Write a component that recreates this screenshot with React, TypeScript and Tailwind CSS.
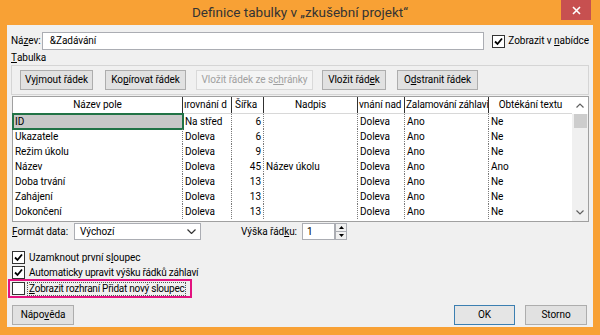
import React from "react";

const cols = [170, 49, 32, 94, 47, 84, 83];

const rows: string[][] = [
  ["ID", "Na střed", "6", "", "Doleva", "Ano", "Ne"],
  ["Ukazatele", "Doleva", "6", "", "Doleva", "Ano", "Ne"],
  ["Režim úkolu", "Doleva", "9", "", "Doleva", "Ano", "Ne"],
  ["Název", "Doleva", "45", "Název úkolu", "Doleva", "Ano", "Ano"],
  ["Doba trvání", "Doleva", "13", "", "Doleva", "Ano", "Ne"],
  ["Zahájení", "Doleva", "13", "", "Doleva", "Ano", "Ne"],
  ["Dokončení", "Doleva", "13", "", "Doleva", "Ano", "Ne"],
];

function Check({ checked }: { checked?: boolean }) {
  return (
    <div className="w-[13px] h-[13px] border border-[#333] bg-white flex items-center justify-center shrink-0">
      {checked && (
        <svg width="9" height="9" viewBox="0 0 9 9">
          <path d="M1 4.5 L3.5 7 L8 1.5" stroke="#000" strokeWidth="1.8" fill="none" />
        </svg>
      )}
    </div>
  );
}

function Btn({ children, w, disabled, focus }: { children: React.ReactNode; w: number; disabled?: boolean; focus?: boolean }) {
  return (
    <div
      style={{ width: w }}
      className={
        "h-[20px] flex items-center justify-center border shrink-0 whitespace-nowrap " +
        (disabled
          ? "border-[#d9d9d9] bg-[#f4f4f4] text-[#a0a0a0]"
          : focus
          ? "border-[#3c7fb1] bg-[#e5e5e5] text-black"
          : "border-[#adadad] bg-[#e1e1e1] text-black")
      }
    >
      {children}
    </div>
  );
}

const headers: React.ReactNode[] = [
  <span className="w-full text-center">Název pole</span>,
  <span className="w-full whitespace-nowrap overflow-hidden pl-[1px]">ırovnání d</span>,
  <span className="w-full pl-[3px]">Šířka</span>,
  <span className="w-full text-center">Nadpis</span>,
  <span className="w-full whitespace-nowrap overflow-hidden pl-[1px]">vnání nad</span>,
  <span className="w-full whitespace-nowrap overflow-hidden pl-[1px] tracking-[-0.15px]">Zalamování záhlavi</span>,
  <span className="w-full text-center">Obtékání textu</span>,
];

export default function App() {
  return (
    <div className="w-[600px] h-[335px] bg-[#f8a135] flex flex-col font-['Roboto',sans-serif] text-[10px] tracking-[-0.05px] text-black leading-none overflow-hidden whitespace-nowrap">
      <div className="h-[25px] relative flex items-center justify-center text-[13.5px] tracking-normal text-[#333] shrink-0">
        Definice tabulky v „zkušební projekt“
        <div className="absolute right-[9px] top-0 w-[30px] h-[20px] bg-[#c75050] flex items-center justify-center">
          <svg width="9" height="9" viewBox="0 0 9 9">
            <path d="M1 1 L8 8 M8 1 L1 8" stroke="#fff" strokeWidth="1.6" />
          </svg>
        </div>
      </div>
      <div className="mx-[7px] h-[302px] bg-[#f0f0f0] flex flex-col px-[4px] shrink-0">
        {/* Name row */}
        <div className="mt-[7px] h-[18px] flex items-center">
          <div className="w-[31px]">
            Ná<u>z</u>ev:
          </div>
          <div className="w-[445px] h-[18px] bg-white border border-[#abadb3] flex items-center pl-[7px]">&amp;Zadávání</div>
          <div className="ml-[8px] flex items-center gap-[3px]">
            <Check checked />
            <span>
              Zobrazit v <u>n</u>abídce
            </span>
          </div>
        </div>
        {/* Tabulka */}
        <div className="mt-[2px] h-[12px] flex items-center">
          <u>T</u>abulka
        </div>
        <div className="mt-[1px] h-[30px] border border-[#d5d5d5] flex items-center pl-[8px]">
          <Btn w={73}>
            Vy<u>j</u>mout řádek
          </Btn>
          <div className="w-[12px]" />
          <Btn w={81}>
            Ko<u>p</u>írovat řádek
          </Btn>
          <div className="w-[10px]" />
          <Btn w={117} disabled>
            Vložit řádek ze s<u>ch</u>ránky
          </Btn>
          <div className="w-[9px]" />
          <Btn w={64}>
            Vložit řád<u>e</u>k
          </Btn>
          <div className="w-[11px]" />
          <Btn w={81}>
            O<u>d</u>stranit řádek
          </Btn>
        </div>
        {/* Table */}
        <div className="mt-[1px] ml-[1px] w-[577px] h-[126px] border border-[#a0a0a0] flex bg-white">
          <div className="flex flex-col">
            <div className="h-[17px] flex border-b border-[#d8d8d8]">
              {headers.map((h, i) => (
                <div
                  key={i}
                  style={{ width: cols[i] }}
                  className={"h-full flex items-center overflow-hidden " + (i < 6 ? "border-r border-[#303030]" : "")}
                >
                  {h}
                </div>
              ))}
            </div>
            {rows.map((r, ri) => (
              <div key={ri} className="h-[15px] flex">
                {r.map((c, ci) => (
                  <div
                    key={ci}
                    style={{ width: cols[ci] }}
                    className={
                      "h-full flex items-center overflow-hidden whitespace-nowrap " +
                      (ci < 6 ? "border-r border-dotted border-[#7a7a7a] " : "") +
                      (ci === 2 ? "justify-end pr-[2px] " : "pl-[2px] ") +
                      (ri === 0 && ci === 0 ? "bg-[#c8c8c8] outline outline-2 outline-[#217346] -outline-offset-1 " : "")
                    }
                  >
                    {c}
                  </div>
                ))}
              </div>
            ))}
          </div>
          <div className="w-[17px] bg-[#f0f0f0] flex flex-col items-center">
            <div className="h-[17px] w-full flex items-center justify-center bg-white">
              <svg width="8" height="5" viewBox="0 0 8 5">
                <path d="M0.5 4.5 L4 1 L7.5 4.5" stroke="#606060" strokeWidth="1.2" fill="none" />
              </svg>
            </div>
            <div className="w-[13px] h-[14px] bg-[#cdcdcd]" />
            <div className="flex-1" />
            <div className="h-[17px] w-full flex items-center justify-center">
              <svg width="8" height="5" viewBox="0 0 8 5">
                <path d="M0.5 0.5 L4 4 L7.5 0.5" stroke="#606060" strokeWidth="1.2" fill="none" />
              </svg>
            </div>
          </div>
        </div>
        {/* Format row */}
        <div className="mt-[1px] h-[17px] flex items-center">
          <div className="w-[63px] pl-[1px]">
            <u>F</u>ormát data:
          </div>
          <div className="w-[127px] h-[17px] bg-white border border-[#abadb3] flex items-center pl-[5px] justify-between pr-[4px]">
            <span>Výchozí</span>
            <svg width="9" height="5" viewBox="0 0 9 5">
              <path d="M0.5 0.5 L4.5 4.5 L8.5 0.5" stroke="#333" strokeWidth="1.2" fill="none" />
            </svg>
          </div>
          <div className="w-[101px] text-right pr-[5px]">
            Výška řád<u>k</u>u:
          </div>
          <div className="w-[33px] h-[17px] bg-white border border-[#abadb3] flex items-center pl-[4px]">1</div>
          <div className="w-[12px] h-[17px] flex flex-col border border-[#abadb3] bg-[#f0f0f0]">
            <div className="flex-1 flex items-center justify-center border-b border-[#abadb3]">
              <svg width="5" height="3" viewBox="0 0 5 3">
                <path d="M0 3 L2.5 0 L5 3 Z" fill="#000" />
              </svg>
            </div>
            <div className="flex-1 flex items-center justify-center">
              <svg width="5" height="3" viewBox="0 0 5 3">
                <path d="M0 0 L2.5 3 L5 0 Z" fill="#000" />
              </svg>
            </div>
          </div>
        </div>
        {/* Checkboxes */}
        <div className="mt-[11px] h-[13px] flex items-center gap-[4px] pl-[1px]">
          <Check checked />
          <span>
            Uzamknout první s<u>l</u>oupec
          </span>
        </div>
        <div className="mt-[2px] h-[13px] flex items-center gap-[4px] pl-[1px]">
          <Check checked />
          <span className="tracking-[-0.2px]">Automaticky upravit výšku řádků záhlaví</span>
        </div>
        <div className="ml-[-3px] w-[184px] h-[19px] border-2 border-[#e3127f] flex items-center pl-[2px] gap-[2px] overflow-hidden">
          <Check />
          <span className="border border-dotted border-[#555] px-[1px] h-[14px] flex items-center tracking-[-0.25px]">
            <u>Z</u>obrazit rozhraní Přidat nový sloupec
          </span>
        </div>
        {/* Bottom buttons */}
        <div className="mt-[7px] h-[19px] flex items-center">
          <div className="ml-[1px]">
            <Btn w={62}>
              Nápo<u>v</u>ěda
            </Btn>
          </div>
          <div className="flex-1" />
          <Btn w={61} focus>
            OK
          </Btn>
          <div className="w-[10px]" />
          <Btn w={62}>Storno</Btn>
          <div className="w-[2px]" />
        </div>
      </div>
    </div>
  );
}
